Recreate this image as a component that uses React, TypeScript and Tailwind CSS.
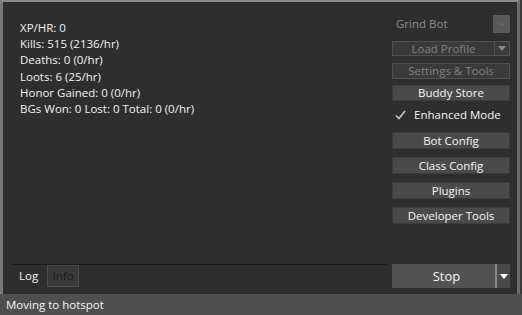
import { ChevronDown } from 'lucide-react';

const stats = [
  'XP/HR: 0',
  'Kills: 515 (2136/hr)',
  'Deaths: 0 (0/hr)',
  'Loots: 6 (25/hr)',
  'Honor Gained: 0 (0/hr)',
  'BGs Won: 0 Lost: 0 Total: 0 (0/hr)',
];

const configButtons = ['Bot Config', 'Class Config', 'Plugins', 'Developer Tools'];

function Arrow({ dim }: { dim?: boolean }) {
  return (
    <svg width="8" height="5" viewBox="0 0 8 5">
      <path d="M0 0 L8 0 L4 5 Z" fill={dim ? '#8a8a8a' : '#ffffff'} />
    </svg>
  );
}

export default function App() {
  return (
    <div
      className="w-[522px] h-[315px] bg-[#3a3a3a] flex flex-col text-[12px] leading-none"
      style={{ fontFamily: '"Open Sans", "Noto Sans", sans-serif' }}
    >
      <div className="flex-1 flex flex-col border-t-[2px] border-l-[3px] border-r-[3px] border-t-[#8a8a8a] border-l-[#7a7a7a] border-r-[#6a6a6a] bg-[#2e2e2e] mr-[2px]">
        <div className="flex-1 flex">
          {/* stats */}
          <div className="flex-1 flex flex-col">
            <div className="flex-1 pt-[18px] pl-[17px] text-[#f2f2f2] text-[11.5px]">
              {stats.map(s => (
                <div key={s} className="h-[16.2px] leading-[16px]">{s}</div>
              ))}
            </div>
            <div className="ml-[9px] mr-[5px] border-t border-[#1a1a1a] h-[30px] flex items-start gap-[2px]">
              <div className="h-[22px] px-[7px] flex items-center text-[#f2f2f2] text-[11.5px]">Log</div>
              <div className="h-[22px] w-[32px] flex items-center justify-center text-[#1c1c1c] text-[11.5px] bg-[#393939] border border-[#4c4c4c]">Info</div>
            </div>
          </div>
          {/* right column */}
          <div className="w-[118px] mr-[7px] flex flex-col pt-[13px] pb-[6px] text-[11.5px]">
            <div className="h-[18px] flex items-center justify-between">
              <span className="pl-[4px] text-[#8c8c8c]">Grind Bot</span>
              <div className="w-[17px] h-[18px] bg-[#5a5a5a] flex items-center justify-center">
                <ChevronDown size={10} color="#7a7a7a" />
              </div>
            </div>
            <div className="mt-[8px] h-[15px] flex border border-[#505050] bg-[#3a3a3a]">
              <div className="flex-1 flex items-center justify-center text-[#808080]">Load Profile</div>
              <div className="w-[15px] border-l border-[#505050] flex items-center justify-center">
                <Arrow dim />
              </div>
            </div>
            <div className="mt-[7px] h-[16px] flex items-center justify-center border border-[#505050] bg-[#3a3a3a] text-[#808080]">
              Settings &amp; Tools
            </div>
            <div className="mt-[6px] h-[16px] flex items-center justify-center border border-[#3c3c3c] bg-[#4a4a4a] text-[#f5f5f5]">
              Buddy Store
            </div>
            <div className="mt-[6px] h-[16px] flex items-center gap-[8px] pl-[3px] text-[#f5f5f5]">
              <svg width="11" height="10" viewBox="0 0 11 10">
                <path d="M1 5.5 L4 8.5 L10 1" stroke="#c8c8c8" strokeWidth="1.6" fill="none" />
              </svg>
              <span>Enhanced Mode</span>
            </div>
            <div className="mt-[9px] flex flex-col gap-[8px]">
              {configButtons.map(b => (
                <div
                  key={b}
                  className="h-[17px] flex items-center justify-center border border-[#3c3c3c] bg-[#4a4a4a] text-[#f5f5f5]"
                >
                  {b}
                </div>
              ))}
            </div>
            <div className="flex-1" />
            <div className="h-[24px] flex">
              <div className="flex-1 bg-[#525252] flex items-center justify-center pl-[6px] text-[#f5f5f5] text-[13px] border-r-[2px] border-[#8a8a8a]">
                Stop
              </div>
              <div className="w-[13px] bg-[#4a4a4a] flex items-center justify-center">
                <Arrow />
              </div>
            </div>
          </div>
        </div>
      </div>
      <div className="h-[21px] bg-[#4f4f4f] flex items-center pl-[6px] text-[#f5f5f5] text-[11.5px]">
        Moving to hotspot
      </div>
    </div>
  );
}
